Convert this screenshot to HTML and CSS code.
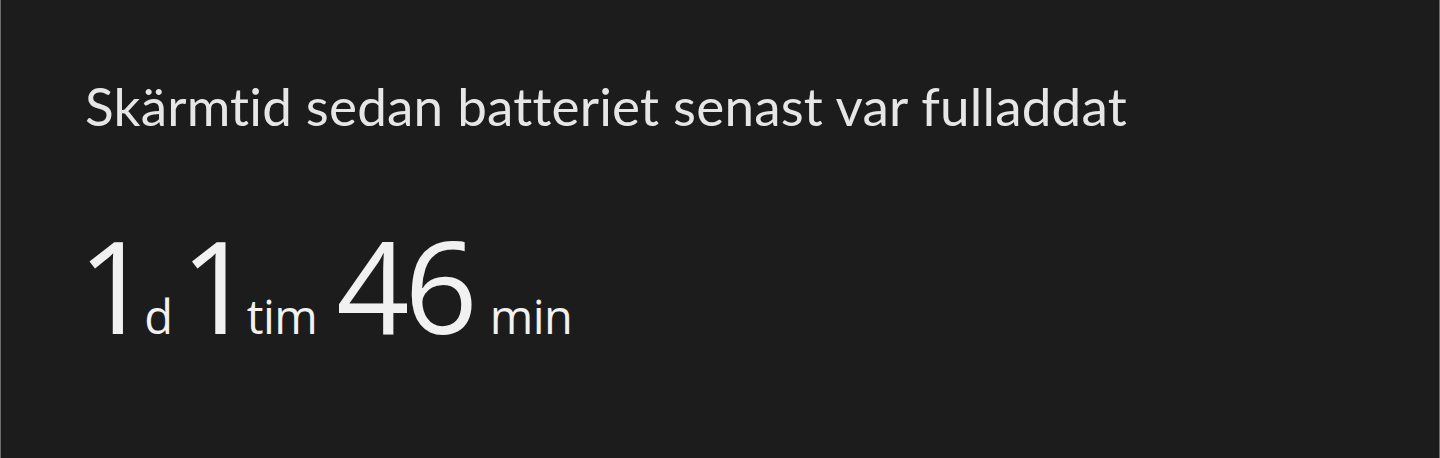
FILE: index.html
```html
<!DOCTYPE html>
<html lang="sv">
<head>
<meta charset="utf-8">
<link rel="stylesheet" href="styles.css">
</head>
<body>
<main class="card">
  <h1 class="title">Skärmtid sedan batteriet senast var fulladdat</h1>
  <div class="usage">
    <span class="num num--one num--first">1</span><span class="unit unit--d">d</span>
    <span class="num num--one">1</span><span class="unit unit--tim">tim</span>
    <span class="num num--wide">46</span><span class="unit unit--min">min</span>
  </div>
</main>
</body>
</html>
```
FILE: styles.css
```css
html, body {
  margin: 0;
  padding: 0;
  background: #1c1c1c;
}
.card {
  box-sizing: border-box;
  width: 1440px;
  height: 458px;
  background: #1c1c1c;
  border-left: 1px solid #6e6e6e;
  border-right: 1px solid #6e6e6e;
  padding: 76px 0 0 84px;
}
.title {
  margin: 0;
  font-family: Lato, "Open Sans", sans-serif;
  font-size: 53px;
  font-weight: 400;
  line-height: 60px;
  letter-spacing: 0.2px;
  font-variant-ligatures: none;
  font-feature-settings: "liga" 0, "dlig" 0;
  color: #e6e6e6;
}
.usage {
  display: flex;
  align-items: baseline;
  margin-top: 84px;
  color: #f1f1f1;
  font-family: "Open Sans", "Liberation Sans", sans-serif;
}
.num {
  font-size: 128px;
  line-height: 130px;
  font-weight: 400;
  letter-spacing: -2px;
}
.num--one {
  letter-spacing: -7px;
}
.num--first {
  margin-left: -7px;
}
.num--wide {
  letter-spacing: -5px;
}
.unit {
  font-size: 47px;
  letter-spacing: -0.5px;
}
.unit--d {
  margin: 0 8px 0 0;
}
.unit--tim {
  margin: 0 19px 0 0;
}
.unit--min {
  margin: 0 0 0 17px;
}
```
